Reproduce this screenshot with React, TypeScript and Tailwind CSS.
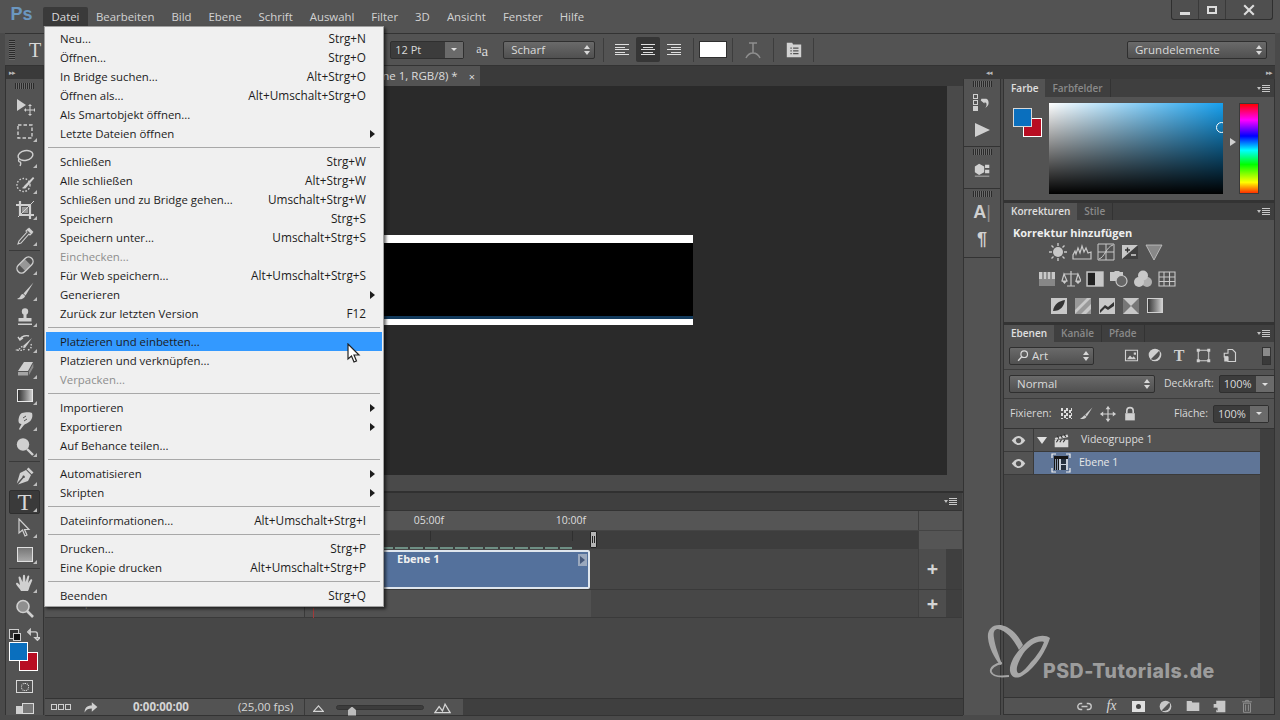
import type { ReactNode } from "react";

type MenuRow = { label: string; keys?: string; sub?: boolean; off?: boolean; hot?: boolean } | "sep";

const menuRows: MenuRow[] = [
  { label: "Neu...", keys: "Strg+N" },
  { label: "Öffnen...", keys: "Strg+O" },
  { label: "In Bridge suchen...", keys: "Alt+Strg+O" },
  { label: "Öffnen als...", keys: "Alt+Umschalt+Strg+O" },
  { label: "Als Smartobjekt öffnen..." },
  { label: "Letzte Dateien öffnen", sub: true },
  "sep",
  { label: "Schließen", keys: "Strg+W" },
  { label: "Alle schließen", keys: "Alt+Strg+W" },
  { label: "Schließen und zu Bridge gehen...", keys: "Umschalt+Strg+W" },
  { label: "Speichern", keys: "Strg+S" },
  { label: "Speichern unter...", keys: "Umschalt+Strg+S" },
  { label: "Einchecken...", off: true },
  { label: "Für Web speichern...", keys: "Alt+Umschalt+Strg+S" },
  { label: "Generieren", sub: true },
  { label: "Zurück zur letzten Version", keys: "F12" },
  "sep",
  { label: "Platzieren und einbetten...", hot: true },
  { label: "Platzieren und verknüpfen..." },
  { label: "Verpacken...", off: true },
  "sep",
  { label: "Importieren", sub: true },
  { label: "Exportieren", sub: true },
  { label: "Auf Behance teilen..." },
  "sep",
  { label: "Automatisieren", sub: true },
  { label: "Skripten", sub: true },
  "sep",
  { label: "Dateiinformationen...", keys: "Alt+Umschalt+Strg+I" },
  "sep",
  { label: "Drucken...", keys: "Strg+P" },
  { label: "Eine Kopie drucken", keys: "Alt+Umschalt+Strg+P" },
  "sep",
  { label: "Beenden", keys: "Strg+Q" },
];

function Ico({ size = 20, children }: { size?: number; children: ReactNode }) {
  return (
    <svg width={size} height={size} viewBox="0 0 20 20" fill="currentColor" className="shrink-0">
      {children}
    </svg>
  );
}

const line = { fill: "none", stroke: "currentColor", strokeWidth: 1.4 };

const tools: Record<string, ReactNode> = {
  move: (
    <Ico>
      <path d="M2 3v12l9-6z" />
      <path d="M15 9v10M10 14h10" {...line} strokeWidth={1} />
      <path d="M15 8l-2 2h4zM15 20l-2-2h4zM9 14l2-2v4zM21 14l-2-2v4z" />
    </Ico>
  ),
  marquee: (
    <Ico>
      <rect x="3" y="3" width="14" height="13" {...line} strokeDasharray="3.5 2" />
    </Ico>
  ),
  lasso: (
    <Ico>
      <ellipse cx="10.5" cy="7.5" rx="7.5" ry="4.8" {...line} transform="rotate(-12 10.5 7.5)" />
      <path d="M4 11c-1 2 0 3 1 3s1 2 0 4" {...line} />
    </Ico>
  ),
  quick: (
    <Ico>
      <circle cx="8.5" cy="11" r="6.5" {...line} strokeDasharray="1.6 1.6" />
      <path d="M9 12l9-9 1.3 1.2-8 9.2c-1 1.5-3 1.5-4.3.6 1-.6 1.5-1 2-2z" />
    </Ico>
  ),
  crop: (
    <Ico>
      <path d="M5 1v14h14M1 5h14v14" fill="none" stroke="currentColor" strokeWidth="2.2" />
      <path d="M19 1L3 17" {...line} strokeWidth={1} />
      <path d="M7 7h6v6H7z" opacity=".55" />
    </Ico>
  ),
  dropper: (
    <Ico>
      <path d="M13 3l4 4-2 2-1-1-8 9-3 1 1-3 8-9-1-1z" {...line} strokeWidth={1.1} />
      <path d="M14 1.5l4.5 4.5-2.5 2-4-4z" />
    </Ico>
  ),
  heal: (
    <Ico>
      <g transform="rotate(-45 10 10)">
        <rect x="0.5" y="5.5" width="19" height="9" rx="4.5" {...line} />
        <rect x="6" y="6" width="8" height="8" opacity=".55" />
      </g>
    </Ico>
  ),
  brush: (
    <Ico>
      <path d="M18.5 1.5L8.5 12.5l2 2z" />
      <path d="M8 13c-2 0-2.5 2-3 3-.5.8-2 1.5-3 2 3 .8 7 .3 8.2-3z" />
    </Ico>
  ),
  stamp: (
    <Ico>
      <circle cx="10" cy="4.5" r="3.2" />
      <path d="M8.5 7h3v4h5v3.5h-13V11h5z" />
      <path d="M3 16.5h14V18H3z" />
    </Ico>
  ),
  history: (
    <Ico>
      <path d="M5 6c2-3 6-4 9-3M3 4l2 3 3-2" {...line} />
      <path d="M17 5L8 13l2 2z" />
      <path d="M7.5 13.5c-2 .5-2 2.5-5 3.5 3 .8 6.5.6 7.5-2zM16 11c1 2.5 0 5-3 6" {...line} strokeDasharray="1.5 1.5" />
    </Ico>
  ),
  eraser: (
    <Ico>
      <path d="M9 3h9l-5 9H3z" />
      <path d="M3 13h10v3.5H3z" opacity=".65" />
      <path d="M13.8 12.5l4.5-8v4l-4.5 8z" opacity=".45" />
    </Ico>
  ),
  gradient: <div className="h-[13px] w-[16px] border border-[#e8e8e8] bg-linear-to-r from-[#333333] to-[#cfcfcf]" />,
  smudge: (
    <Ico>
      <path d="M7 2c3-1 9-1 10 0 1 3 0 7-3 9-2 1.5-4 2-5 3l-4 5-1-1 2.5-5c-2 0-3-1-3-3 0-3 1-7 3.5-8z" />
      <path d="M9 10l3-2M8 7l3-2" stroke="#535353" strokeWidth="1" />
    </Ico>
  ),
  dodge: (
    <Ico>
      <circle cx="8" cy="7.5" r="6.2" />
      <path d="M12 12l6 6" {...line} strokeWidth={2.4} />
    </Ico>
  ),
  pen: (
    <Ico>
      <path d="M13.5 1.5l5 5-1.8 1.8-5-5z" />
      <path d="M11 4l5 5-3 6-10 3.500 5.500-6.500c1 .5 2-1 1-2s-2.500 0-2 1L1.800 17.500 5 7z" />
    </Ico>
  ),
  type: <span className="font-['Liberation_Serif',serif] text-[23px] leading-none text-[#d8d8d8]">T</span>,
  arrow: (
    <Ico>
      <path d="M4 1v14l3.5-3 2.5 6 2-1-2.5-5.5H14z" fill="none" stroke="currentColor" strokeWidth="1.2" />
    </Ico>
  ),
  shape: <div className="h-[15px] w-[16px] border border-[#e0e0e0] bg-linear-to-b from-[#777777] to-[#a8a8a8]" />,
  hand: (
    <Ico>
      <path d="M6 18c-1-2-4-5-5-7 0-1 1-1.500 2-.8L5 12 3.500 4.500c0-1.200 1.500-1.200 2-.2L7.500 9 8 2.500c.2-1 1.800-1 2 0L10.500 9l2-6c.4-1 2-.7 1.800.5L13 10l2.500-3.500c.8-.8 2.200 0 1.700 1L14.500 14c-.5 2-1 3-1.500 4z" />
    </Ico>
  ),
  zoom: (
    <Ico>
      <circle cx="8" cy="7.5" r="6" fill="#8f8f8f" stroke="currentColor" strokeWidth="1.6" />
      <path d="M12 12l6 6" {...line} strokeWidth={2.6} />
    </Ico>
  ),
};

function Tool({ name, active, corner = true }: { name: string; active?: boolean; corner?: boolean }) {
  return (
    <div className="relative flex h-[26px] items-center justify-center text-[#d0d0d0]">
      {active && <div className="absolute inset-x-[3px] inset-y-px rounded-[2px] border border-[#2f2f2f] bg-[#3a3a3a]" />}
      <div className="relative flex items-center justify-center">{tools[name]}</div>
      {corner && <div className="absolute bottom-[3px] right-[6px] h-0 w-0 border-b-[4px] border-l-[4px] border-b-[#bdbdbd] border-l-transparent" />}
    </div>
  );
}

function Grip({ w = "w-[19px]" }: { w?: string }) {
  return <div className={`mx-auto h-[6px] ${w} bg-[repeating-linear-gradient(to_right,#2a2a2a_0,#2a2a2a_1px,#6a6a6a_1px,#6a6a6a_2px)]`} />;
}

function Toolbox() {
  return (
    <div className="flex w-[45px] shrink-0 pl-[5px]">
      <div className="flex w-[39px] flex-col border-x border-[#333333] bg-[#535353]">
        <div className="flex h-[13px] items-center bg-[#3a3a3a] pl-[3px] text-[7px] leading-none tracking-[-1px] text-[#b8b8b8]">▸▸</div>
        <div className="pt-[4px] pb-[4px]">
          <Grip />
        </div>
        {["move", "marquee", "lasso", "quick", "crop", "dropper"].map((n) => (
          <Tool key={n} name={n} corner={n !== "move"} />
        ))}
        <div className="mx-[3px] my-px h-px bg-[#3a3a3a]" />
        {["heal", "brush", "stamp", "history", "eraser", "gradient", "smudge", "dodge"].map((n) => (
          <Tool key={n} name={n} />
        ))}
        <div className="mx-[3px] my-px h-px bg-[#3a3a3a]" />
        {["pen", "type", "arrow", "shape"].map((n) => (
          <Tool key={n} name={n} active={n === "type"} />
        ))}
        <div className="mx-[3px] my-px h-px bg-[#3a3a3a]" />
        {["hand", "zoom"].map((n) => (
          <Tool key={n} name={n} corner={n !== "zoom"} />
        ))}
        <div className="flex h-[18px] items-center justify-between px-[3px] pt-[6px] text-[#d0d0d0]">
          <div className="relative h-[10px] w-[10px] border border-[#cfcfcf] bg-[#333333]">
            <div className="absolute left-[3px] top-[3px] h-[8px] w-[8px] border border-[#cfcfcf] bg-[#111111]" />
          </div>
          <Ico size={13}>
            <path d="M3 6h10c2 0 3 2 3 4v6M1 6l4-4v8zM16 19l-4-4h8z" {...line} strokeWidth={2} />
          </Ico>
        </div>
        <div className="relative mt-[2px] ml-[3px] h-[29px] w-[29px]">
          <div className="absolute left-[10px] top-[10px] h-[19px] w-[19px] border border-white bg-[#b80d22]" />
          <div className="absolute left-0 top-0 h-[19px] w-[19px] border border-white bg-[#0a6fbe]" />
        </div>
        <div className="mt-[9px] flex justify-center">
          <div className="flex h-[13px] w-[17px] items-center justify-center border border-[#d8d8d8]">
            <div className="h-[8px] w-[8px] rounded-full border border-dotted border-white" />
          </div>
        </div>
        <div className="mt-[10px] flex justify-center">
          <div className="flex items-end">
            <div className="h-[8px] w-[6px] bg-[#cfcfcf]" />
            <div className="h-[11px] w-[12px] border border-[#d8d8d8] bg-[#777777]" />
          </div>
        </div>
      </div>
    </div>
  );
}

function MenuBar() {
  const items = ["Bearbeiten", "Bild", "Ebene", "Schrift", "Auswahl", "Filter", "3D", "Ansicht", "Fenster", "Hilfe"];
  return (
    <div className="flex h-[33px] shrink-0 items-start bg-[#535353] text-[11.4px]">
      <div className="flex h-[26px] w-[43px] items-center justify-center pt-[2px] font-['Liberation_Sans',sans-serif] text-[18px] font-bold text-[#6b97c0]">Ps</div>
      <div className="mt-[7px] flex h-[19px] w-[45px] items-center justify-center rounded-t-[2px] bg-[#3a3a3a] text-[#dcdcdc]">Datei</div>
      <div className="mt-[7px] ml-[8px] flex h-[19px] items-center gap-[17px] text-[#d2d2d2]">
        {items.map((m) => (
          <span key={m}>{m}</span>
        ))}
      </div>
      <div className="ml-auto mr-[7px] flex h-[20px] w-[102px] rounded-b-[3px] border-x border-b border-[#2f2f2f] bg-[#4f4f4f] text-[#dcdcdc]">
        <div className="flex w-[27px] items-end justify-center border-r border-[#3a3a3a] pb-[4px]">
          <div className="h-[3px] w-[10px] bg-[#dcdcdc]" />
        </div>
        <div className="flex w-[27px] items-center justify-center border-r border-[#3a3a3a]">
          <div className="h-[8px] w-[10px] border-2 border-[#dcdcdc]" />
        </div>
        <div className="flex flex-1 items-center justify-center">
          <Ico size={12}>
            <path d="M2 2l16 16M18 2L2 18" fill="none" stroke="currentColor" strokeWidth="3.5" />
          </Ico>
        </div>
      </div>
    </div>
  );
}

function Updown() {
  return (
    <span className="ml-auto flex flex-col gap-[2px]">
      <span className="h-0 w-0 border-x-[3px] border-b-[4px] border-x-transparent border-b-[#d8d8d8]" />
      <span className="h-0 w-0 border-x-[3px] border-t-[4px] border-x-transparent border-t-[#d8d8d8]" />
    </span>
  );
}

function Select({ w, label }: { w: string; label: ReactNode }) {
  return (
    <div className={`flex h-[18px] ${w} shrink-0 items-center rounded-[2px] border border-[#2f2f2f] bg-linear-to-b from-[#6a6a6a] to-[#505050] pl-[7px] pr-[4px] text-[11.5px] text-[#dadada]`}>
      {label}
      <Updown />
    </div>
  );
}

function Combo({ w, value }: { w: string; value: string }) {
  return (
    <div className={`flex h-[18px] ${w} shrink-0 rounded-[2px] border border-[#2f2f2f] bg-[#3c3c3c] text-[11px] text-[#dadada]`}>
      <span className="flex-1 pl-[4px] leading-[16px]">{value}</span>
      <span className="flex w-[18px] items-center justify-center bg-[#6a6a6a]">
        <span className="h-0 w-0 border-x-[3px] border-t-[3px] border-x-transparent border-t-[#e0e0e0]" />
      </span>
    </div>
  );
}

function Align({ mode, active }: { mode: "l" | "c" | "r"; active?: boolean }) {
  const rows = [14, 10, 14, 10, 14];
  const cls = mode === "l" ? "items-start" : mode === "c" ? "items-center" : "items-end";
  return (
    <div className={`flex h-[25px] w-[24px] flex-col justify-center gap-[1.5px] ${cls} rounded-[2px] px-[5px] ${active ? "bg-[#363636]" : ""}`}>
      {rows.map((r, i) => (
        <div key={i} className={`h-px bg-[#dedede] ${r === 14 ? "w-[14px]" : "w-[10px]"}`} />
      ))}
    </div>
  );
}

function OptionsBar() {
  return (
    <div className="flex h-[33px] shrink-0 items-center pl-[5px] pr-[5px]">
      <div className="flex h-full w-full items-center border-y border-[#333333] bg-[#535353]">
        <div className="ml-[4px] h-[20px] w-[6px] bg-[repeating-linear-gradient(to_bottom,#2a2a2a_0,#2a2a2a_1px,#6a6a6a_1px,#6a6a6a_2px)]" />
        <span className="ml-[14px] font-['Liberation_Serif',serif] text-[20px] text-[#d8d8d8]">T</span>
        <div className="ml-[349px]">
          <Combo w="w-[74px]" value="12 Pt" />
        </div>
        <span className="ml-[12px] flex w-[20px] items-end font-['Liberation_Serif',serif] text-[#d8d8d8]">
          <span className="text-[12px] leading-[15px]">a</span>
          <span className="text-[15px] leading-[12px]">a</span>
        </span>
        <div className="ml-[7px]">
          <Select w="w-[92px]" label="Scharf" />
        </div>
        <div className="ml-[8px] h-[24px] w-px bg-[#3d3d3d]" />
        <div className="ml-[6px] flex gap-[2px]">
          <Align mode="l" />
          <Align mode="c" active />
          <Align mode="r" />
        </div>
        <div className="ml-[7px] h-[24px] w-px bg-[#3d3d3d]" />
        <div className="ml-[5px] h-[17px] w-[28px] border border-[#2f2f2f] bg-white" />
        <div className="ml-[5px] h-[24px] w-px bg-[#3d3d3d]" />
        <div className="ml-[10px] text-[#8f8f8f]">
          <Ico size={20}>
            <path d="M6 3h8M10 3v10M3 18c2-4 4-5 7-5s5 1 7 5" fill="none" stroke="currentColor" strokeWidth="1.5" />
          </Ico>
        </div>
        <div className="ml-[10px] h-[24px] w-px bg-[#3d3d3d]" />
        <div className="ml-[11px] text-[#d2d2d2]">
          <Ico size={18}>
            <path d="M2 2h6l1 2h9v14H2z" />
            <path d="M6 8h1.5M9 8h6M6 11h1.5M9 11h6M6 14h1.5M9 14h6" stroke="#535353" strokeWidth="1.3" />
          </Ico>
        </div>
        <div className="ml-[10px] h-[24px] w-px bg-[#3d3d3d]" />
        <div className="ml-auto mr-[8px]">
          <Select w="w-[140px]" label="Grundelemente" />
        </div>
      </div>
    </div>
  );
}

function FlyoutIcon() {
  return (
    <span className="flex items-center gap-px">
      <span className="h-0 w-0 border-x-[2.5px] border-t-[3px] border-x-transparent border-t-[#c0c0c0]" />
      <span className="flex flex-col gap-px">
        <span className="h-px w-[8px] bg-[#c8c8c8]" />
        <span className="h-px w-[8px] bg-[#c8c8c8]" />
        <span className="h-px w-[8px] bg-[#c8c8c8]" />
        <span className="h-px w-[8px] bg-[#c8c8c8]" />
      </span>
    </span>
  );
}

function Plus() {
  return <span className="text-[20px] font-bold leading-none text-[#d5d5d5]">+</span>;
}

function Timeline() {
  return (
    <div className="flex h-[205px] shrink-0 flex-col bg-[#474747] pr-[1px]">
      <div className="flex h-[18px] shrink-0 items-center justify-end border-b border-[#333333] bg-[#3f3f3f] pr-[5px]">
        <FlyoutIcon />
      </div>
      <div className="flex h-[20px] shrink-0 border-b border-[#444444] bg-[#555555]">
        <div className="w-[260px] border-r border-[#3a3a3a]" />
        <div className="flex flex-1 pl-[53px] text-[10.5px] leading-[19px] text-[#dedede]">
          <span className="w-[142px] text-center">05:00f</span>
          <span className="w-[142px] text-center">10:00f</span>
        </div>
        <div className="w-px bg-[#3f3f3f]" />
        <div className="w-[43px]" />
      </div>
      <div className="flex h-[18px] shrink-0">
        <div className="w-[260px] border-r border-[#3a3a3a] bg-[#535353]" />
        <div className="relative flex-1 bg-[#3d3d3d]">
          <div className="absolute left-[125px] top-0 h-[10px] w-px bg-[#2f2f2f]" />
          <div className="absolute left-[267px] top-0 h-[10px] w-px bg-[#2f2f2f]" />
          <div className="absolute bottom-0 left-0 h-[2px] w-[267px] bg-[repeating-linear-gradient(to_right,#6e8f84_0,#6e8f84_13px,#3d3d3d_13px,#3d3d3d_15px)]" />
          <div className="absolute left-[285px] top-0 flex h-[17px] w-[7px] items-center justify-center rounded-[1px] border border-[#222222] bg-[#b5b5b5]">
            <div className="h-[7px] w-[3px] border-x border-[#222222]" />
          </div>
        </div>
        <div className="w-px bg-[#3f3f3f]" />
        <div className="w-[43px] bg-[#555555]" />
      </div>
      <div className="flex h-[41px] shrink-0 border-b border-[#3a3a3a]">
        <div className="w-[260px] border-r border-[#3a3a3a] bg-[#535353]" />
        <div className="flex-1 pl-[5px] pt-px">
          <div className="relative h-[39px] w-[280px] rounded-[2px] border-2 border-[#dfe6ee] bg-[#54719c] pl-[85px] pt-0 text-[11px] font-bold leading-[14px] text-[#f0f0f0]">
            Ebene 1
            <div className="absolute right-[1px] top-[2px] flex h-[12px] w-[9px] items-center justify-center bg-[#9aa8bd]">
              <span className="h-0 w-0 border-y-[4px] border-l-[5px] border-y-transparent border-l-[#47597a]" />
            </div>
          </div>
        </div>
        <div className="w-px bg-[#3f3f3f]" />
        <div className="flex w-[27px] items-center justify-center bg-[#4d4d4d]">
          <Plus />
        </div>
        <div className="w-[16px] bg-[#3f3f3f]" />
      </div>
      <div className="flex h-[28px] shrink-0 border-b border-[#3a3a3a]">
        <div className="w-[260px] border-r border-[#3a3a3a] bg-[#535353] pl-[8px] text-[10px] leading-[24px] text-[#a0a0a0]">Audiospur</div>
        <div className="relative flex-1">
          <div className="ml-0 h-full w-[286px] bg-[#515151]" />
          <div className="absolute left-[8px] top-[18px] h-[10px] w-px bg-[#a33a3a]" />
        </div>
        <div className="w-px bg-[#3f3f3f]" />
        <div className="flex w-[27px] items-center justify-center bg-[#4d4d4d]">
          <Plus />
        </div>
        <div className="w-[16px] bg-[#3f3f3f]" />
      </div>
    </div>
  );
}

function TimelineFooter() {
  return (
    <div className="flex h-[18px] shrink-0 items-center border-y border-[#333333] bg-[#3f3f3f] text-[#d5d5d5]">
      <div className="flex h-full w-[259px] shrink-0 items-center bg-[#535353] pl-[6px]">
        <div className="flex gap-px">
          <div className="h-[6px] w-[6px] border border-[#cfcfcf]" />
          <div className="h-[6px] w-[6px] border border-[#cfcfcf]" />
          <div className="h-[6px] w-[6px] border border-[#cfcfcf]" />
        </div>
        <div className="ml-[12px] text-[#d0d0d0]">
          <Ico size={16}>
            <path d="M2 17c0-6 3-9 9-9V4l7 6-7 6v-4c-4 0-7 1-9 5z" />
          </Ico>
        </div>
        <span className="ml-[34px] text-[11.5px] font-bold">0:00:00:00</span>
        <span className="ml-[49px] text-[11.5px]">(25,00 fps)</span>
      </div>
      <div className="flex h-full w-[159px] shrink-0 items-center border-l border-[#3a3a3a] bg-[#535353] pl-[8px]">
        <Ico size={11}>
          <path d="M1 17l9-10 9 10z" fill="none" stroke="currentColor" strokeWidth="2" />
        </Ico>
        <div className="relative ml-[12px] h-[5px] w-[88px] rounded-full border border-[#333333] bg-[#3c3c3c]">
          <div className="absolute left-[11px] top-[1px] h-[9px] w-[8px] bg-[#bdbdbd] [clip-path:polygon(50%_0,100%_40%,100%_100%,0_100%,0_40%)]" />
        </div>
        <div className="ml-[10px]">
          <Ico size={17}>
            <path d="M1 16l5-7 4 5 3-8 6 10z" fill="none" stroke="currentColor" strokeWidth="1.5" />
          </Ico>
        </div>
      </div>
    </div>
  );
}

function Center() {
  return (
    <div className="flex w-[918px] shrink-0 flex-col">
      <div className="flex h-[20px] shrink-0 bg-[#3a3a3a]">
        <div className="flex w-[435px] items-center justify-end gap-[11px] bg-[#535353] pr-[5px] text-[#dcdcdc]">
          <span className="text-[11.5px]">Unbenannt-1 (Ebene 1, RGB/8) *</span>
          <span className="text-[11px] leading-none">×</span>
        </div>
      </div>
      <div className="flex h-[389px] shrink-0">
        <div className="flex-1 overflow-hidden bg-[#2a2a2a] pl-[300px] pt-[149px]">
          <div className="flex h-[90px] w-[348px] flex-col">
            <div className="h-[8px] bg-white" />
            <div className="h-[73px] bg-black" />
            <div className="h-[3px] bg-[#123a5c]" />
            <div className="h-[6px] bg-white" />
          </div>
        </div>
        <div className="w-[16px] bg-[#4a4a4a]" />
      </div>
      <div className="h-[16px] shrink-0 bg-[#4a4a4a]" />
      <div className="h-[2px] shrink-0 bg-[#303030]" />
      <Timeline />
      <TimelineFooter />
    </div>
  );
}

function DockBlock({ h, children }: { h: string; children: ReactNode }) {
  return (
    <div className={`flex ${h} shrink-0 flex-col items-center border-b border-[#333333] pt-[2px] text-[#d0d0d0]`}>
      <Grip />
      {children}
    </div>
  );
}

function Dock() {
  return (
    <div className="flex w-[38px] shrink-0 flex-col border-x border-[#333333] bg-[#535353]">
      <DockBlock h="h-[68px]">
        <div className="mt-[7px] flex items-center gap-px">
          <div className="flex flex-col gap-px">
            <div className="h-[5px] w-[5px] border border-[#cfcfcf]" />
            <div className="h-[5px] w-[5px] border border-[#cfcfcf]" />
            <div className="h-[5px] w-[5px] bg-[#cfcfcf]" />
          </div>
          <Ico size={12}>
            <path d="M4 3h7c4 0 5 4 5 7 0 3-2 7-6 8 3-2 3-6 2-8-.5-1-2-1-3-1v2L3 6z" />
          </Ico>
        </div>
        <div className="mt-[12px] h-0 w-0 border-y-[7px] border-l-[15px] border-y-transparent border-l-[#cfcfcf]" />
      </DockBlock>
      <DockBlock h="h-[42px]">
        <div className="mt-[8px]">
          <Ico size={17}>
            <path d="M6 1l6 3v7l-6 3-5-3V4zM13 2h5v4h-5zM13 8h5v4h-5zM1 15h17v1H1z" />
          </Ico>
        </div>
      </DockBlock>
      <DockBlock h="h-[69px]">
        <div className="mt-[5px] flex h-[20px] items-center font-['Liberation_Sans',sans-serif] text-[18px] font-bold leading-none text-[#d0d0d0]">
          A<span className="font-light text-[#8f8f8f]">|</span>
        </div>
        <div className="mt-[8px] font-['Liberation_Sans',sans-serif] text-[18px] font-bold leading-none">¶</div>
      </DockBlock>
    </div>
  );
}

function Tabs({ first, rest, h = "h-[18px]" }: { first: string; rest: string[]; h?: string }) {
  return (
    <div className={`flex ${h} shrink-0 items-stretch bg-[#3f3f3f] font-semibold`}>
      <span className="flex items-center bg-[#535353] pl-[7px] pr-[7px] text-[10px] text-[#e0e0e0]">{first}</span>
      {rest.map((t) => (
        <span key={t} className="flex items-center border-r border-[#333333] px-[7px] text-[10px] text-[#8a8a8a]">
          {t}
        </span>
      ))}
      <span className="ml-auto flex items-center pr-[4px]">
        <FlyoutIcon />
      </span>
    </div>
  );
}

function ColorPanel() {
  return (
    <div className="flex h-[122px] shrink-0 flex-col border-b border-[#333333]">
      <Tabs first="Farbe" rest={["Farbfelder"]} />
      <div className="flex flex-1 bg-[#535353] pl-[9px] pt-[6px]">
        <div className="relative mt-[5px] h-[29px] w-[29px] shrink-0">
          <div className="absolute left-[10px] top-[10px] h-[19px] w-[19px] border border-white bg-[#b80d22]" />
          <div className="absolute left-0 top-0 h-[19px] w-[19px] border border-[#d8d8d8] bg-[#0a6fbe]" />
        </div>
        <div className="relative ml-[7px] h-[91px] w-[174px] shrink-0 overflow-hidden bg-[#17a0ee]">
          <div className="absolute inset-0 bg-linear-to-r from-white to-transparent" />
          <div className="absolute inset-0 bg-linear-to-b from-transparent to-black" />
          <div className="absolute right-[-4px] top-[19px] h-[11px] w-[11px] rounded-full border border-white" />
        </div>
        <div className="ml-[7px] mt-[35px] h-0 w-0 border-y-[4px] border-l-[6px] border-y-transparent border-l-[#d0d0d0]" />
        <div className="ml-[3px] h-[91px] w-[20px] shrink-0 border border-[#3a3a3a] bg-[linear-gradient(to_bottom,#ff0000,#ff00ff_18%,#0000ff_36%,#00ffff_52%,#00ff00_68%,#ffff00_88%,#ff3000)]" />
      </div>
    </div>
  );
}

const adjust: ReactNode[][] = [
  [
    <Ico key="a">
      <circle cx="10" cy="10" r="5" />
      <path d="M10 1v3M10 16v3M1 10h3M16 10h3M3.5 3.5l2 2M14.5 14.5l2 2M16.5 3.5l-2 2M5.5 14.5l-2 2" {...line} />
    </Ico>,
    <Ico key="b">
      <path d="M1 17V13l2-4 1 3 2-6 2 5 2-7 2 6 2-4 2 5 3-1v7z" fill="none" stroke="currentColor" strokeWidth="1.2" />
    </Ico>,
    <Ico key="c">
      <path d="M2 2h16v16H2zM2 10h16M10 2v16M3 17C9 15 10 5 17 3" fill="none" stroke="currentColor" strokeWidth="1" />
    </Ico>,
    <Ico key="d">
      <path d="M2 3h16v14H2z" />
      <path d="M2 17L18 3v14z" fill="#3f3f3f" />
      <path d="M5 8h5M7.5 5.5v5" stroke="#333333" strokeWidth="1.4" />
      <path d="M11 13h5" stroke="#dddddd" strokeWidth="1.4" />
    </Ico>,
    <Ico key="e">
      <path d="M2 3h16l-8 15z" fill="#888888" stroke="currentColor" strokeWidth=".8" />
    </Ico>,
  ],
  [
    <Ico key="a">
      <path d="M2 3h16v7H2z" />
      <path d="M2 10h16v7H2z" opacity=".45" />
      <path d="M6 3v7M10 3v7M14 3v7" stroke="#555555" />
    </Ico>,
    <Ico key="b">
      <path d="M10 2v15M6 17h8M3 5h14M3 5l-2 7h5zM17 5l-2 7h5z" {...line} strokeWidth={1.2} />
      <path d="M1 12h5l-2.5 3zM14 12h6l-3 3z" />
    </Ico>,
    <Ico key="c">
      <rect x="2" y="3" width="16" height="14" {...line} />
      <path d="M10 3h8v14h-8z" />
      <path d="M3 4h7v12H3z" fill="#222222" />
    </Ico>,
    <Ico key="d">
      <path d="M1 3h4l1-1h4l1 1h3v9H1z" />
      <circle cx="12.5" cy="12" r="5.5" fill="#666666" stroke="currentColor" strokeWidth="1.2" />
    </Ico>,
    <Ico key="e">
      <circle cx="10" cy="6.5" r="5" />
      <circle cx="6" cy="13" r="5" />
      <circle cx="14" cy="13" r="5" opacity=".8" />
    </Ico>,
    <Ico key="f">
      <path d="M2 3h16v14H2zM2 8h16M2 12.5h16M7 3v14M12.5 3v14" fill="none" stroke="currentColor" strokeWidth="1.1" />
    </Ico>,
  ],
  [
    <Ico key="a">
      <path d="M2 2h16v16H2z" />
      <path d="M4 15C5 8 10 5 16 4c-1 6-4 11-12 11z" fill="#333333" />
    </Ico>,
    <Ico key="b">
      <path d="M2 2h16v16H2z" opacity=".6" />
      <path d="M2 14L14 2h4L2 18zM8 18L18 8v5l-5 5z" />
    </Ico>,
    <Ico key="c">
      <path d="M2 2h16v16H2z" />
      <path d="M3 14l5-5 3 2 6-5v4l-6 4-3-2-5 5z" fill="#333333" />
    </Ico>,
    <Ico key="d">
      <path d="M2 2h16v16H2z" />
      <path d="M2 2l8 8-8 8zM18 2l-8 8 8 8z" fill="#777777" />
    </Ico>,
    <div key="e" className="h-[15px] w-[16px] border border-[#d0d0d0] bg-linear-to-r from-[#3a3a3a] to-[#d0d0d0]" />,
  ],
];

function AdjustPanel() {
  const indent = ["pl-[42px]", "pl-[31px]", "pl-[43px]"];
  return (
    <div className="flex h-[120px] shrink-0 flex-col border-b border-[#333333] bg-[#535353]">
      <Tabs first="Korrekturen" rest={["Stile"]} h="h-[17px]" />
      <div className="pl-[9px] pt-[5px] text-[11px] font-bold leading-[15px] text-[#eeeeee]">Korrektur hinzufügen</div>
      <div className="-mt-[2px] flex flex-col text-[#c8c8c8]">
        {adjust.map((row, i) => (
          <div key={i} className={`flex h-[27px] items-center ${indent[i]}`}>
            {row.map((ic, j) => (
              <span key={j} className="flex w-[24px] justify-center">
                {ic}
              </span>
            ))}
          </div>
        ))}
      </div>
    </div>
  );
}

function Eye() {
  return (
    <div className="flex w-[30px] shrink-0 items-center justify-center border-r border-[#3a3a3a] text-[#d0d0d0]">
      <Ico size={15}>
        <path d="M1 10c3-4 6-6 9-6s6 2 9 6c-3 4-6 6-9 6s-6-2-9-6z" />
        <circle cx="10" cy="10" r="3.5" fill="#535353" />
      </Ico>
    </div>
  );
}

function LayersPanel() {
  return (
    <div className="flex min-h-0 flex-1 flex-col">
      <Tabs first="Ebenen" rest={["Kanäle", "Pfade"]} h="h-[17px]" />
      <div className="flex h-[28px] shrink-0 items-center border-b border-[#3c3c3c] bg-[#535353] pl-[5px] text-[#d0d0d0]">
        <Select
          w="w-[85px]"
          label={
            <span className="flex items-center gap-[3px]">
              <Ico size={12}>
                <circle cx="12" cy="7" r="5.5" {...line} strokeWidth={2} />
                <path d="M8 11l-6 7" {...line} strokeWidth={2.4} />
              </Ico>
              Art
            </span>
          }
        />
        <div className="ml-[27px] flex gap-[4px]">
          <span className="flex w-[20px] justify-center">
            <Ico size={15}>
              <path d="M2 3h16v14H2z" fill="none" stroke="currentColor" strokeWidth="1.5" />
              <path d="M4 15l4-5 3 3 2-2 3 4zM13 6h3v3h-3z" />
            </Ico>
          </span>
          <span className="flex w-[20px] justify-center">
            <Ico size={14}>
              <circle cx="10" cy="10" r="9" />
              <path d="M16 4L4 16a9 9 0 0 0 12-12z" fill="#535353" />
            </Ico>
          </span>
          <span className="flex w-[20px] justify-center font-['Liberation_Serif',serif] text-[16px] font-bold leading-[16px]">T</span>
          <span className="flex w-[20px] justify-center">
            <Ico size={15}>
              <path d="M3 3h14v14H3z" {...line} />
              <path d="M1 1h4v4H1zM15 1h4v4h-4zM1 15h4v4H1zM15 15h4v4h-4z" />
            </Ico>
          </span>
          <span className="flex w-[24px] justify-center">
            <Ico size={15}>
              <path d="M8 2h6l4 4v12H8v-6H3V7h5z" fill="none" stroke="currentColor" strokeWidth="1.5" />
              <path d="M3 11h5v7H3z" />
            </Ico>
          </span>
        </div>
        <div className="ml-[21px] flex h-[18px] w-[9px] flex-col border border-[#333333]">
          <div className="flex-1 bg-[#8a8a8a]" />
          <div className="flex-1 bg-[#3a3a3a]" />
        </div>
      </div>
      <div className="flex h-[29px] shrink-0 items-center border-b border-[#3c3c3c] bg-[#535353] pl-[5px] text-[#d8d8d8]">
        <Select w="w-[146px]" label="Normal" />
        <span className="ml-[9px] text-[10.5px]">Deckkraft:</span>
        <div className="ml-[5px]">
          <Combo w="w-[56px]" value="100%" />
        </div>
      </div>
      <div className="flex h-[30px] shrink-0 items-center border-b border-[#333333] bg-[#535353] pl-[6px] text-[10.5px] text-[#d8d8d8]">
        <span>Fixieren:</span>
        <div className="ml-[9px] flex items-center gap-[6px] text-[#d0d0d0]">
          <span className="h-[11px] w-[11px] bg-[conic-gradient(#555555_25%,#dddddd_0_50%,#555555_0_75%,#dddddd_0)] bg-[length:5px_5px]" />
          <Ico size={16}>
            <path d="M18 2L9 11l2 2zM8.5 11.5c-2 .5-2.5 3-6 4 4 1.5 7 .5 8-2z" />
          </Ico>
          <Ico size={16}>
            <path d="M10 1v18M1 10h18" {...line} />
            <path d="M10 0l-3 4h6zM10 20l-3-4h6zM0 10l4-3v6zM20 10l-4-3v6z" />
          </Ico>
          <Ico size={16}>
            <path d="M6 9V6a4 4 0 0 1 8 0v3" {...line} strokeWidth={2} />
            <path d="M4 9h12v9H4z" />
          </Ico>
        </div>
        <span className="ml-auto">Fläche:</span>
        <div className="ml-[5px] mr-[5px]">
          <Combo w="w-[56px]" value="100%" />
        </div>
      </div>
      <div className="flex min-h-0 flex-1 bg-[#3f3f3f]">
        <div className="flex w-[256px] flex-col bg-[#484848]">
          <div className="flex h-[23px] shrink-0 border-b border-[#3a3a3a] bg-[#535353]">
            <Eye />
            <span className="ml-[3px] h-0 w-0 self-center border-x-[5px] border-t-[7px] border-x-transparent border-t-[#e0e0e0]" />
            <span className="ml-[6px] self-center text-[#d8d8d8]">
              <Ico size={17}>
                <path d="M2 9h16v9H2zM2 7l15-4 1 3L3 9z" />
                <path d="M5 4.5l2 3.5M9 3.5l2 3.5M13 2.5l2 3.5M6 9l-2 3M10 9l-2 3M14 9l-2 3" stroke="#333333" strokeWidth="1.3" />
              </Ico>
            </span>
            <span className="ml-[11px] self-center text-[10.5px] text-[#dcdcdc]">Videogruppe 1</span>
          </div>
          <div className="flex h-[23px] shrink-0 border-b border-[#3a3a3a]">
            <div className="flex bg-[#535353]">
              <Eye />
            </div>
            <div className="flex flex-1 items-center bg-[#5f7597] pl-[17px]">
              <svg width="20" height="20" viewBox="0 0 20 20" className="shrink-0">
                <path d="M1 5V1h4M15 1h4v4M19 15v4h-4M5 19H1v-4" fill="none" stroke="#f0f0f0" strokeWidth="1.2" />
                <path d="M3 3h14v3H8v11H3z" fill="#151515" />
                <path d="M8 6h9v11H8z" fill="#c8d0dc" />
                <path d="M10 6h5v5h-5zM10 12h5v5h-5z" fill="#25303f" />
                <path d="M4.5 6v11M6.5 6v11" stroke="#8a99ad" />
              </svg>
              <span className="ml-[8px] text-[10.5px] text-[#e8e8e8]">Ebene 1</span>
            </div>
          </div>
        </div>
      </div>
      <div className="flex h-[18px] shrink-0 items-center border-y border-[#333333] bg-[#535353] pl-[67px] text-[#c8c8c8]">
        <div className="flex w-[27px] justify-center">
          <Ico size={15}>
            <path d="M7 6H5a4 4 0 0 0 0 8h2M13 6h2a4 4 0 0 1 0 8h-2M6 10h8" {...line} strokeWidth={1.8} />
          </Ico>
        </div>
        <span className="flex w-[27px] justify-center font-['Liberation_Serif',serif] text-[14px] italic leading-none text-[#d8d8d8]">fx</span>
        <div className="flex w-[27px] justify-center">
          <div className="flex h-[11px] w-[13px] items-center justify-center bg-[#e0e0e0]">
            <div className="h-[5px] w-[5px] rounded-full bg-[#444444]" />
          </div>
        </div>
        <div className="flex w-[27px] justify-center">
          <Ico size={13}>
            <circle cx="10" cy="10" r="9" />
            <path d="M16 4L4 16a9 9 0 0 0 12-12z" fill="#535353" />
          </Ico>
        </div>
        <div className="flex w-[27px] justify-center">
          <Ico size={14}>
            <path d="M1 3h7l1 2h10v12H1z" />
          </Ico>
        </div>
        <div className="flex w-[27px] justify-center">
          <Ico size={13}>
            <path d="M5 1h14v18H5v-7H1V6h4z" />
            <path d="M2 12l5 5v-5z" fill="#535353" />
          </Ico>
        </div>
        <div className="flex w-[27px] justify-center text-[#8f8f8f]">
          <Ico size={14}>
            <path d="M3 4h14M8 4V2h4v2M5 6h10v13H5zM8 8v9M12 8v9" {...line} />
          </Ico>
        </div>
      </div>
    </div>
  );
}

function RightSide() {
  return (
    <div className="flex w-[312px] shrink-0 flex-col">
      <div className="flex h-[13px] shrink-0 items-center justify-between bg-[#3a3a3a] pl-[23px] pr-[3px] text-[7px] leading-none tracking-[-1px] text-[#b8b8b8]">
        <span>◂◂</span>
        <span>▸▸</span>
      </div>
      <div className="flex min-h-0 flex-1">
        <Dock />
        <div className="ml-[2px] flex w-[272px] flex-col gap-[2px] border-x border-[#333333] bg-[#333333]">
          <ColorPanel />
          <AdjustPanel />
          <LayersPanel />
        </div>
      </div>
    </div>
  );
}

function FileMenu() {
  return (
    <div className="absolute left-[44px] top-[26px] w-[340px] border border-[#a0a0a0] bg-[#f0f0f0] px-px pt-[2px] pb-px text-[#1c1c1c] shadow-[2px_2px_3px_rgba(0,0,0,0.6)]">
      {menuRows.map((row, i) =>
        row === "sep" ? (
          <div key={i} className="flex h-[9px] items-center px-[2px]">
            <div className="h-px w-full bg-[#a8a8a8]" />
          </div>
        ) : (
          <div key={row.label} className={`flex h-[19px] items-center pl-[14px] pr-[16px] ${row.hot ? "bg-[#3399ff]" : ""} ${row.off ? "text-[#8e8e8e]" : ""}`}>
            <span className="text-[11.4px]">{row.label}</span>
            {row.keys && <span className="ml-auto text-[11.8px]">{row.keys}</span>}
            {row.sub && <span className="ml-auto -mr-[9px] h-0 w-0 border-y-[4px] border-l-[5px] border-y-transparent border-l-[#1c1c1c]" />}
          </div>
        ),
      )}
    </div>
  );
}

function Cursor() {
  return (
    <svg className="absolute left-[346px] top-[343px]" width="16" height="22" viewBox="0 0 16 22">
      <path d="M2 1v15l3.5-3 2.5 6 2.5-1-2.500-6H13z" fill="#ffffff" stroke="#222222" strokeWidth="1.2" />
    </svg>
  );
}

function Watermark() {
  return (
    <div className="absolute left-[987px] top-[624px] flex items-end text-[#a6a6a6]">
      <svg width="64" height="58" viewBox="0 0 64 58" fill="currentColor" className="shrink-0">
        <path d="M1 14C0 6 5 0 14 1c10 2 18 11 22 20l-4 5C27 16 20 7 11 5 7 5 6 9 7 14c1 8 5 18 8 26l-2 1C7 33 2 24 1 14z" />
        <path d="M15 39C8 40 3 44 4 48c2 5 10 5 18 4" fill="none" stroke="currentColor" strokeWidth="2" />
        <path fillRule="evenodd" d="M63 14C58 10 48 11 40 18 30 27 22 38 23 47c1 7 7 8 12 5C46 46 58 30 63 14zM57 18C50 16 42 22 36 30c-5 8-8 16-5 19 2 1 7-3 13-11 6-6 11-14 13-20z" />
      </svg>
      <span className="-ml-[8px] mb-0 font-['Inter',sans-serif] text-[19.5px] font-extrabold leading-[22px] tracking-[0.5px] opacity-90">PSD-Tutorials.de</span>
    </div>
  );
}

export default function App() {
  return (
    <div className="relative flex h-[720px] w-[1280px] flex-col overflow-hidden bg-[#4a4a4a] font-['Open_Sans',sans-serif] text-[12px]">
      <MenuBar />
      <OptionsBar />
      <div className="flex min-h-0 flex-1 pb-[5px]">
        <Toolbox />
        <Center />
        <RightSide />
      </div>
      <FileMenu />
      <Cursor />
      <Watermark />
    </div>
  );
}
